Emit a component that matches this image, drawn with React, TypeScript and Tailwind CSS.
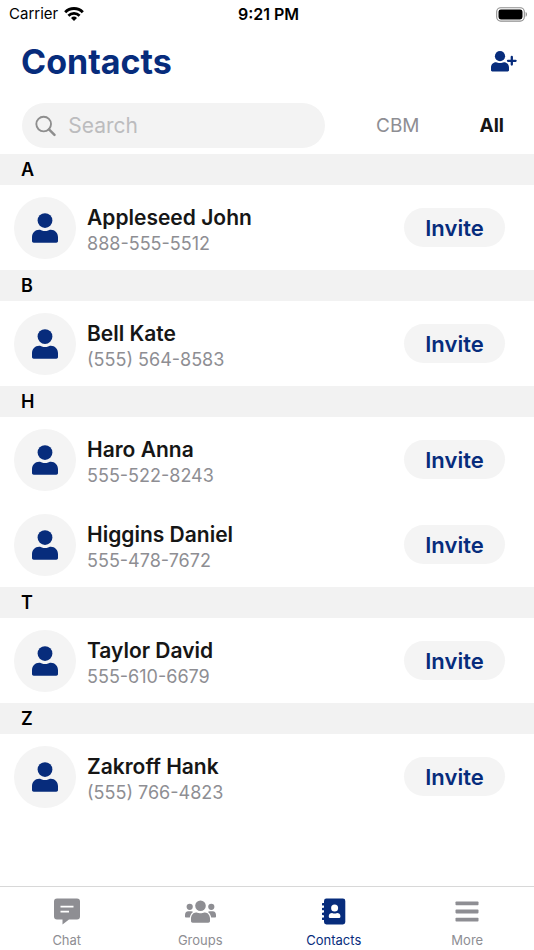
import { useState } from "react";

type Contact = { name: string; phone: string };
type Section = { letter: string; contacts: Contact[] };

const sections: Section[] = [
  { letter: "A", contacts: [{ name: "Appleseed John", phone: "888-555-5512" }] },
  { letter: "B", contacts: [{ name: "Bell Kate", phone: "(555) 564-8583" }] },
  {
    letter: "H",
    contacts: [
      { name: "Haro Anna", phone: "555-522-8243" },
      { name: "Higgins Daniel", phone: "555-478-7672" },
    ],
  },
  { letter: "T", contacts: [{ name: "Taylor David", phone: "555-610-6679" }] },
  { letter: "Z", contacts: [{ name: "Zakroff Hank", phone: "(555) 766-4823" }] },
];

function WifiIcon() {
  return (
    <svg width="20" height="16" viewBox="0 0 20 16" fill="none" stroke="currentColor" aria-hidden="true">
      <path d="M1.2 6.200a12.400 12.400 0 0 1 17.600 0" strokeWidth="2.900" />
      <path d="M4.400 9.700a7.900 7.900 0 0 1 11.200 0" strokeWidth="2.700" />
      <path d="M10 15l-3-3a4.300 4.300 0 0 1 6 0z" fill="currentColor" stroke="none" />
    </svg>
  );
}

function BatteryIcon() {
  return (
    <svg width="32" height="15" viewBox="0 0 32 15" aria-hidden="true">
      <rect x="0.7" y="0.7" width="27.6" height="13.4" rx="4" fill="none" stroke="#8e8e8e" strokeWidth="1.1" />
      <rect x="2.5" y="2.4" width="24" height="10" rx="2.4" fill="#000" />
      <path d="M29.6 5c1.8.7 1.8 4 0 4.8z" fill="#8e8e8e" />
    </svg>
  );
}

function SearchIcon() {
  return (
    <svg width="24" height="24" viewBox="0 0 24 24" fill="none" stroke="#8e8e8e" aria-hidden="true">
      <circle cx="9.800" cy="9.800" r="8.300" strokeWidth="2.100" />
      <path d="M15.800 15.800l6.200 6.200" strokeWidth="2.800" strokeLinecap="round" />
    </svg>
  );
}

function PersonIcon() {
  return (
    <svg width="26" height="30" viewBox="0 0 26 30" fill="currentColor" aria-hidden="true">
      <circle cx="13" cy="7.600" r="7.400" />
      <path d="M7.200 16.800c1.200 0 1.800.3 2.700.6 2 .7 4.200.7 6.200 0 .9-.3 1.500-.6 2.700-.6 4.200 0 7.200 3.300 7.200 7.500V28c0 1-.8 1.700-1.700 1.700H1.700C.8 29.700 0 29 0 28v-3.700c0-4.200 3-7.500 7.200-7.500z" />
    </svg>
  );
}

function AddPersonIcon() {
  return (
    <svg width="26" height="21" viewBox="0 0 26 21" fill="currentColor" aria-hidden="true">
      <circle cx="9" cy="5.200" r="5.100" />
      <path d="M5 11.200c.8 0 1.200.2 1.900.5 1.300.5 2.900.5 4.200 0 .7-.3 1.100-.5 1.900-.5 2.900 0 5 2.400 5 5.300v2.700c0 .7-.6 1.200-1.200 1.200H1.200C.6 20.400 0 19.900 0 19.200v-2.700c0-2.900 2.100-5.300 5-5.300z" />
      <path d="M20.800 6v7.600M17 9.800h7.600" stroke="currentColor" strokeWidth="2.300" strokeLinecap="round" />
    </svg>
  );
}

function ChatIcon() {
  return (
    <svg width="26" height="27" viewBox="0 0 26 27" aria-hidden="true">
      <path
        d="M3 .5h20A3 3 0 0 1 26 3.500v15a3 3 0 0 1-3 3h-8l-6.500 5v-5H3a3 3 0 0 1-3-3v-15A3 3 0 0 1 3 .5z"
        fill="currentColor"
      />
      <path d="M6.500 8.600h13M6.500 13.700H15" stroke="#fff" strokeWidth="1.800" />
    </svg>
  );
}

function GroupsIcon() {
  return (
    <svg width="31" height="27" viewBox="0 0 31 27" fill="currentColor" aria-hidden="true">
      <circle cx="15.500" cy="7.800" r="5.300" />
      <circle cx="4.700" cy="8.800" r="3.100" />
      <circle cx="26.300" cy="8.800" r="3.100" />
      <path d="M11 14.400c1.300 0 1.700.4 2.700.7 1.200.3 2.400.3 3.600 0 1-.3 1.400-.7 2.700-.7 2.900 0 5 3 5 6.200v2.400c0 1-.7 1.700-1.700 1.700H7.700c-1 0-1.700-.7-1.700-1.700v-2.400c0-3.200 2.100-6.200 5-6.200z" />
      <path d="M3.200 13.300h3c.8 0 1.400.2 1.900.6-2 1.300-2.900 3.300-3.300 5.700H1.200C.5 19.600 0 19.100 0 18.400V17c0-2.100 1.300-3.700 3.200-3.700z" />
      <path d="M27.800 13.300h-3c-.8 0-1.400.2-1.900.6 2 1.300 2.900 3.300 3.300 5.700h3.600c.7 0 1.200-.5 1.200-1.200V17c0-2.100-1.300-3.700-3.200-3.700z" />
    </svg>
  );
}

function ContactsIcon() {
  return (
    <svg width="24" height="27" viewBox="0 0 24 27" aria-hidden="true">
      <rect x="2" y=".5" width="21.300" height="26" rx="2.400" fill="currentColor" />
      <path
        d="M1 6.200h2M1 11h2M1 15.900h2M1 20.700h2"
        stroke="currentColor"
        strokeWidth="2.600"
        strokeLinecap="round"
      />
      <circle cx="12.600" cy="10" r="3.500" fill="#fff" />
      <path
        d="M10.100 14.900c1.600.8 3.400.8 5 0 1.900 0 3.300 1.300 3.300 3v1.200c0 .5-.4.8-.9.8H7.700c-.5 0-.9-.3-.9-.8v-1.200c0-1.700 1.400-3 3.300-3z"
        fill="#fff"
      />
    </svg>
  );
}

function MoreIcon() {
  return (
    <svg width="24" height="27" viewBox="0 0 24 27" fill="currentColor" aria-hidden="true">
      <rect x=".5" y="3.500" width="23" height="3.800" rx=".8" />
      <rect x=".5" y="11.600" width="23" height="3.800" rx=".8" />
      <rect x=".5" y="19.700" width="23" height="3.800" rx=".8" />
    </svg>
  );
}

const tabs = [
  { label: "Chat", Icon: ChatIcon },
  { label: "Groups", Icon: GroupsIcon },
  { label: "Contacts", Icon: ContactsIcon },
  { label: "More", Icon: MoreIcon },
];

function ContactRow({ name, phone }: Contact) {
  return (
    <li className="flex h-[85px] items-center pr-[29px] pl-3.5">
      <div className="flex size-[62px] shrink-0 items-center justify-center rounded-full bg-[#f4f4f4] text-[#072c7c]">
        <PersonIcon />
      </div>
      <div className="ml-[11px] min-w-0 flex-1 pt-1">
        <p className="text-[21px] leading-7 font-semibold text-[#161616]">{name}</p>
        <p className="text-lg leading-6 text-[#8e8e93]">{phone}</p>
      </div>
      <button
        type="button"
        aria-label={`Invite ${name}`}
        className="h-[39px] w-[101px] shrink-0 rounded-full bg-[#f4f4f4] text-[22px] leading-7 font-semibold text-[#072c7c]"
      >
        Invite
      </button>
    </li>
  );
}

export default function App() {
  const [query, setQuery] = useState("");

  return (
    <div className="flex min-h-screen flex-col bg-white font-['Inter','Liberation_Sans',sans-serif] text-black">
      <div className="grid h-7 grid-cols-3 items-center pr-1.5 pl-[9px] leading-5">
        <div className="flex items-center gap-1.5 text-[15px]">
          <span>Carrier</span>
          <WifiIcon />
        </div>
        <time className="text-center text-base font-semibold">9:21 PM</time>
        <div className="flex justify-end">
          <BatteryIcon />
        </div>
      </div>

      <header className="flex h-[75px] items-center justify-between pr-[17px] pb-2 pl-[21px] text-[#072c7c]">
        <h1 className="text-[34px] leading-10 font-bold">Contacts</h1>
        <button type="button" aria-label="Add contact">
          <AddPersonIcon />
        </button>
      </header>

      <div className="flex items-center pr-[30px] pb-1.5 pl-[22px]">
        <label className="flex h-[45px] min-w-0 flex-1 items-center gap-3 rounded-full bg-[#f3f3f3] pl-[13px]">
          <SearchIcon />
          <input
            type="search"
            aria-label="Search"
            placeholder="Search"
            value={query}
            onChange={(event) => setQuery(event.target.value)}
            className="w-full min-w-0 bg-transparent text-[21px] leading-7 outline-none placeholder:text-[#bcbcbe]"
          />
        </label>
        <div className="ml-[51px] flex shrink-0 items-center gap-[60px] text-[19px] leading-7">
          <button type="button" className="text-[#8e8e93]">
            CBM
          </button>
          <button type="button" aria-pressed="true" className="font-bold text-[#161616]">
            All
          </button>
        </div>
      </div>

      <main className="flex-1">
        {sections.map(({ letter, contacts }) => (
          <section key={letter}>
            <h2 className="h-[31px] bg-[#f2f2f2] pl-[21px] text-lg leading-8 font-semibold">{letter}</h2>
            <ul>
              {contacts.map((contact) => (
                <ContactRow key={contact.name} {...contact} />
              ))}
            </ul>
          </section>
        ))}
      </main>

      <nav className="grid h-16 grid-cols-4 border-t border-[#d8d8d8]">
        {tabs.map(({ label, Icon }) => (
          <a
            key={label}
            href={`#${label.toLowerCase()}`}
            aria-current={label === "Contacts" ? "page" : undefined}
            className="flex flex-col items-center gap-[5px] pt-[11px] text-[13px] leading-5 text-[#8e8e93] aria-[current=page]:text-[#072c7c]"
          >
            <Icon />
            <span>{label}</span>
          </a>
        ))}
      </nav>
    </div>
  );
}
